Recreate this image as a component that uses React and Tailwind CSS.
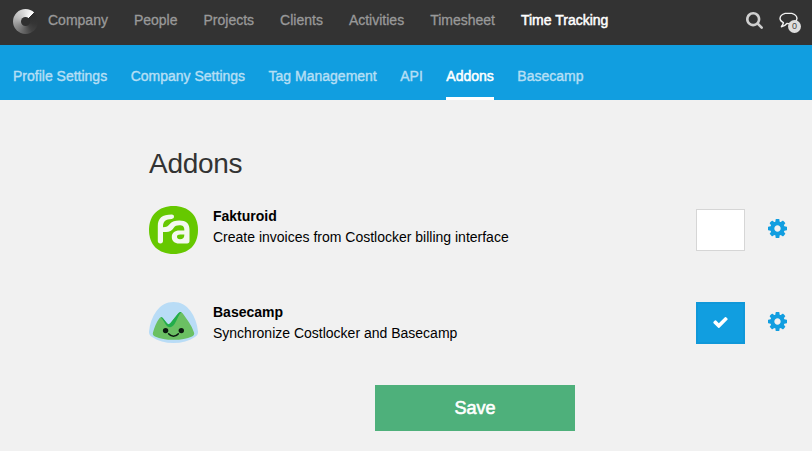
const mainNav = ['Company', 'People', 'Projects', 'Clients', 'Activities', 'Timesheet', 'Time Tracking'];
const subNav = ['Profile Settings', 'Company Settings', 'Tag Management', 'API', 'Addons', 'Basecamp'];

function Logo() {
  return (
    <div className="flex size-[25px] shrink-0 items-center justify-center rounded-full bg-[conic-gradient(from_45deg,#2f2f2f_0deg,#353535_60deg,#414141_100deg,#686868_150deg,#8f8f8f_200deg,#bcbcbc_250deg,#d8d8d8_300deg,#ffffff_358deg,#2f2f2f_360deg)]">
      <div className="size-[9px] rounded-full bg-[#303030]" />
    </div>
  );
}

function SearchIcon() {
  return (
    <svg className="h-[17px] w-[17px]" viewBox="64 128 1664 1664" fill="#cfcfcf">
      <path d="M1216 832q0-185-131.5-316.5t-316.5-131.5-316.5 131.5-131.5 316.5 131.5 316.5 316.5 131.5 316.5-131.5 131.5-316.5zm512 832q0 52-38 90t-90 38q-54 0-90-38l-343-342q-179 124-399 124-143 0-273.5-55.5t-225-150-150-225-55.5-273.5 55.5-273.5 150-225 225-150 273.5-55.5 273.5 55.5 225 150 150 225 55.5 273.5q0 220-124 399l343 343q37 37 37 90z" />
    </svg>
  );
}

function ChatIcon() {
  return (
    <svg className="h-[17px] w-[19px]" viewBox="0 0 19 17" fill="none" stroke="#f0f0f0" strokeWidth="1.4" strokeLinejoin="round">
      <path d="M9.5 1C4.6 1 1 3.3 1 6.3c0 1.9 1.3 3.5 3.4 4.4-.2 1.5-.9 2.8-2 4 2.3-.4 4.2-1.500 5.500-3.200.5.1 1 .1 1.600.1 4.800 0 8.500-2.300 8.500-5.300S14.300 1 9.500 1z" />
    </svg>
  );
}

function Cog() {
  return (
    <svg className="size-[19px]" viewBox="0 128 1536 1536" fill="#119ee0">
      <path d="M1024 896q0-106-75-181t-181-75-181 75-75 181 75 181 181 75 181-75 75-181zM1536 787v222q0 12-8 23t-20 13l-185 28q-19 54-39 91q35 50 107 138q10 12 10 25t-9 23q-27 37-99 108t-94 71q-12 0-26-9l-138-108q-44 23-91 38q-16 136-29 186q-7 28-36 28h-222q-14 0-24.5-8.5t-11.5-21.5l-28-184q-49-16-90-37l-141 107q-10 9-25 9q-14 0-25-11q-126-114-165-168q-7-10-7-23q0-12 8-23q15-21 51-66.5t54-70.5q-27-50-41-99l-183-27q-13-2-21-12.5t-8-23.5v-222q0-12 8-23t19-13l186-28q14-46 39-92q-40-57-107-138q-10-12-10-24q0-10 9-23q26-36 98.5-107.5t94.5-71.5q13 0 26 10l138 107q44-23 91-38q16-136 29-186q7-28 36-28h222q14 0 24.5 8.5t11.5 21.5l28 184q49 16 90 37l142-107q9-9 24-9q13 0 25 10q129 119 165 170q7 8 7 22q0 12-8 23q-15 21-51 66.5t-54 70.5q26 50 41 98l183 28q13 2 21 12.5t8 23.5z" />
    </svg>
  );
}

function Check() {
  return (
    <svg className="mb-[2px] h-[11px] w-[15px]" viewBox="121 334 1550 1188" fill="#fff">
      <path d="M1671 566q0 40-28 68l-724 724-136 136q-28 28-68 28t-68-28l-136-136-362-362q-28-28-28-68t28-68l136-136q28-28 68-28t68 28l294 295 656-657q28-28 68-28t68 28l136 136q28 28 28 68z" />
    </svg>
  );
}

function FakturoidLogo() {
  return (
    <svg className="h-12 w-[49px]" viewBox="0 0 49 48">
      <path d="M24.500 0C39.500 0 49 9 49 24S39.500 48 24.500 48 0 39 0 24 9.500 0 24.500 0z" fill="#66c800" />
      <path
        d="M8.800 20C8.800 12 13 8.400 22.800 8.400c1.400 0 2.200.8 2.200 2.200s-.8 2.200-2.200 2.300c-6 .2-8.600 2.100-8.800 7.400v1c3.400-.1 5.200-1.200 7-3.600 2-2.400 5-3.200 9.300-3.200 6.900 0 10.200 3 10.200 9.300V35c0 1.600-.8 2.400-2.400 2.400h-7.900c-4.700 0-7.400-2.400-7.400-6.500s2.900-6.500 7.700-6.500h4.800v-.8c0-3.100-1.500-4.400-5-4.400-2.700 0-4.200.7-5.500 2.500-2.100 3-4.200 4.200-7.600 4.200h-3.200V35c0 1.600-.9 2.400-2.600 2.400S8.800 36.600 8.800 35zM35.300 28.500h-4.100c-2.200 0-3.200.7-3.200 2.300 0 1.600 1 2.500 2.900 2.500 2.800 0 4.400-1.600 4.400-4z"
        fill="#f4f8f0"
        fillRule="evenodd"
      />
    </svg>
  );
}

function BasecampLogo() {
  return (
    <svg className="h-[41px] w-[49px]" viewBox="0 0 49 41">
      <path d="M24.500 0C17.500 0 12 3 7.500 9 3.300 14.800.8 21.500 0 29.500c-.2 2.700.8 4.200 3.500 5.700C9 39 16 41 24.500 41s15.500-2 21-5.800c2.700-1.500 3.700-3 3.500-5.700-.8-8-3.300-14.700-7.500-20.500C37 3 31.500 0 24.500 0z" fill="#b9dcf6" />
      <path d="M4 30.500C5.300 25.500 7.500 20.300 10.200 16.600c1.300-1.700 2.700-1.700 4-.1l3.800 4.700c1.200 1.300 2.300 1.200 3.500-.1l7.600-9.600c1.600-2 3.300-2 4.700.1C38 17.500 42.700 23.500 45 30.500c.6 2-.1 3-2 3.900-5 2.300-11 3.400-18.500 3.400S11 36.700 6 34.400c-1.900-.9-2.600-1.900-2-3.900z" fill="#6bc063" />
      <path d="M11.600 15.400c1-.3 1.800.1 2.600 1.100l3.800 4.700c1.200 1.300 2.300 1.200 3.500-.1l7.600-9.600c1.100-1.300 2.100-1.800 3.200-1.300-2.700 2.700-4.300 7.500-6.600 11.600-2.800 4.600-6.700 4.500-9.200.4-1.400-2.300-2.500-5.200-4.900-6.800z" fill="#22ad4b" />
      <circle cx="16.600" cy="28.600" r="2.700" fill="#0c1a10" />
      <circle cx="32.300" cy="28.600" r="2.700" fill="#0c1a10" />
      <path d="M19.600 31.800c2.500 3.200 7.300 3.200 9.800 0" stroke="#0c1a10" strokeWidth="1.500" fill="none" strokeLinecap="round" />
    </svg>
  );
}

export default function App() {
  return (
    <div className="flex h-[451px] w-[812px] flex-col overflow-hidden bg-[#f1f1f1] font-['Liberation_Sans',Arial,sans-serif] text-sm text-black">
      <header className="flex h-[45px] shrink-0 bg-[#333333] pl-[13px]">
        <div className="pt-[9px]">
          <Logo />
        </div>
        <nav className="flex gap-[26px] pt-[10px] pl-[10px] leading-5 whitespace-nowrap text-[#999999] [-webkit-text-stroke:0.300px_currentColor]">
          {mainNav.map((label) => (
            <a key={label} className={label === 'Time Tracking' ? 'text-white [-webkit-text-stroke:0.500px_#fff]' : ''}>
              {label}
            </a>
          ))}
        </nav>
        <div className="ml-auto flex gap-4 pt-3 pr-[14px]">
          <SearchIcon />
          <div className="relative">
            <ChatIcon />
            <span className="absolute top-[8px] left-[9px] flex size-[13px] items-center justify-center rounded-full bg-[#dedede] text-[9px] leading-none text-[#444]">0</span>
          </div>
        </div>
      </header>
      <nav className="flex h-[55px] shrink-0 gap-[23.500px] bg-[#119ee0] pl-[13px] leading-5 whitespace-nowrap text-[#b5dff5] [-webkit-text-stroke:0.400px_currentColor]">
        {subNav.map((label) => (
          <a
            key={label}
            className={
              label === 'Addons'
                ? 'border-b-[3px] border-white pt-[21px] text-white [-webkit-text-stroke:0.500px_#fff]'
                : 'pt-[21px]'
            }
          >
            {label}
          </a>
        ))}
      </nav>
      <main className="flex flex-col pr-[25px] pl-[149px]">
        <h1 className="mt-[46px] text-[28px] leading-9 tracking-[-0.300px] text-[#333333]">Addons</h1>
        <section className="mt-6 flex h-12">
          <FakturoidLogo />
          <div className="ml-[15px] leading-[21px]">
            <h2 className="font-bold">Fakturoid</h2>
            <p>Create invoices from Costlocker billing interface</p>
          </div>
          <div className="mt-[3px] ml-auto h-[42px] w-[49px] border border-[#d6d6d6] bg-white" />
          <div className="mt-[13px] ml-[23px]">
            <Cog />
          </div>
        </section>
        <section className="mt-12 flex h-[42px]">
          <BasecampLogo />
          <div className="ml-[15px] leading-[21px]">
            <h2 className="font-bold">Basecamp</h2>
            <p>Synchronize Costlocker and Basecamp</p>
          </div>
          <div className="ml-auto flex h-[42px] w-[49px] items-center justify-center border-2 border-[#1098d9] bg-[#119ee0]">
            <Check />
          </div>
          <div className="mt-[10px] ml-[23px]">
            <Cog />
          </div>
        </section>
        <button className="mt-[41px] ml-[226px] h-[46px] w-[200px] bg-[#4eb07b] text-lg text-white [-webkit-text-stroke:0.600px_#fff]">
          Save
        </button>
      </main>
    </div>
  );
}
